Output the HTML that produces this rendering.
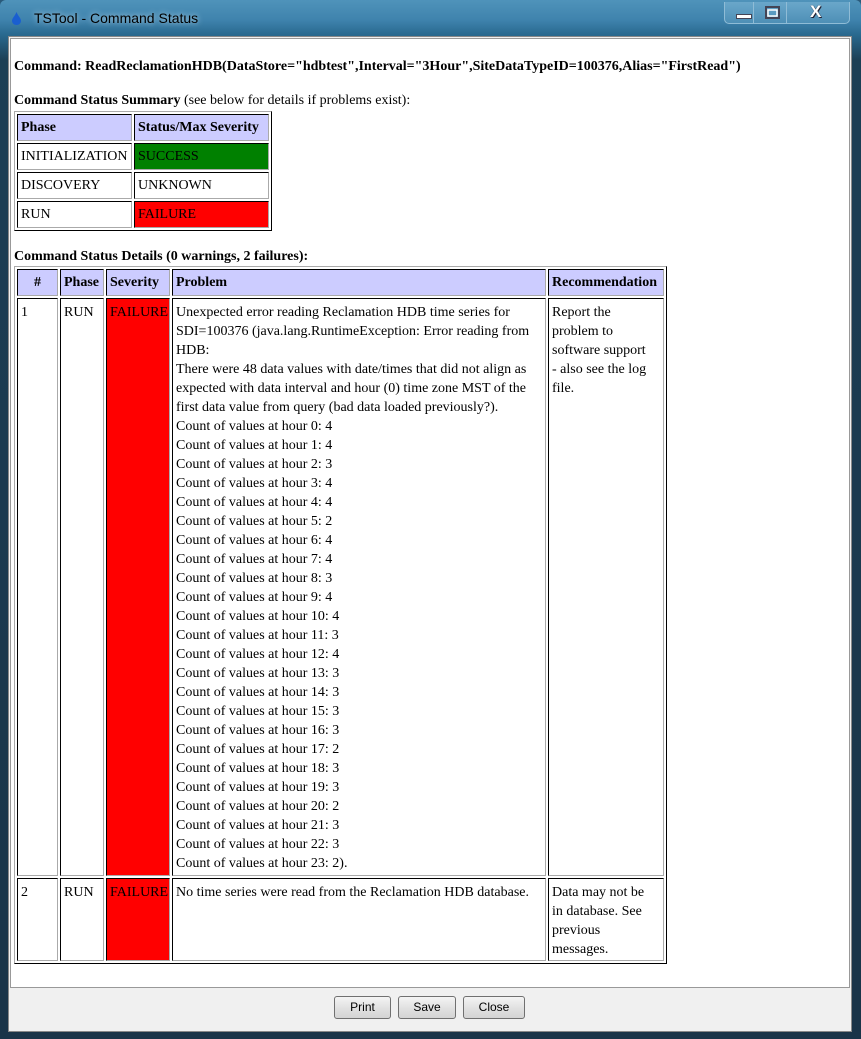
<!DOCTYPE html>
<html><head><meta charset="utf-8"><style>
*{margin:0;padding:0;box-sizing:border-box}
body{width:861px;height:1039px;overflow:hidden;background:#2a5a7a;font-family:"Liberation Serif",serif;font-size:14px;color:#000;position:relative}
.frame{position:absolute;left:0;top:0;width:861px;height:1039px;background:linear-gradient(180deg,#4f93ba 0,#3f83ad 20px,#2a6a90 34px,#1c3f55 60px,#1a3448 1039px);border-radius:6px 6px 0 0}
.title{position:absolute;left:34px;top:10px;font-family:"Liberation Sans",sans-serif;font-size:14px;color:#000;text-shadow:0 0 6px #cfe6f4}
.drop{position:absolute;left:12px;top:12px;width:9px;height:13px}
.btns{position:absolute;left:724px;top:2px;width:126px;height:22px;border:1px solid #8fbcd6;border-top:none;border-radius:0 0 5px 5px;background:linear-gradient(#6aa7ca,#4e8fb6)}
.btns div{position:absolute;top:0;height:21px;border-right:1px solid #8fbcd6}
.inner{position:absolute;left:8px;top:36px;width:844px;height:996px;background:#f0f0f0;border:1px solid #888}
.white{position:absolute;left:10px;top:38px;width:840px;height:950px;background:#fff;border:1px solid #999}
.abs{position:absolute;white-space:nowrap}
b{font-weight:bold}
table{position:absolute;border-collapse:separate;border-spacing:2px;border:1px solid;border-color:#aaa #000 #000 #aaa}
table.det{table-layout:fixed}
td,th{border:1px solid;border-color:#000 #aaa #aaa #000;padding:0 3px;text-align:left;vertical-align:top;font-size:14px;line-height:19px}
th{background:#ccf;font-weight:bold;vertical-align:middle}
.sum td{vertical-align:middle}
.g{background:#008000}.r{background:#f00}
.btn{position:absolute;top:996px;height:23px;border:1px solid #707070;border-radius:3px;background:linear-gradient(#f4f4f4,#e2e2e2 50%,#d4d4d4);font-family:"Liberation Sans",sans-serif;font-size:12px;text-align:center;line-height:21px}
</style></head><body>
<div class="frame"></div>
<svg class="drop" viewBox="0 0 9 13"><path d="M4.5 0 C6 4 9 6 9 9 A4.5 4 0 0 1 0 9 C0 6 3 4 4.5 0Z" fill="#1a5fd0"/></svg>
<div class="title">TSTool - Command Status</div>
<div class="btns"><div style="left:0;width:29px"></div><div style="left:29px;width:33px"></div>
<svg style="position:absolute;left:11px;top:12px" width="16" height="5"><rect x="0.5" y="0.5" width="15" height="4" fill="#fff" stroke="#445"/></svg>
<svg style="position:absolute;left:40px;top:4px" width="15" height="13"><rect x="1" y="1" width="13" height="11" fill="none" stroke="#445" stroke-width="2"/><rect x="3" y="4" width="9" height="6" fill="none" stroke="#fff" stroke-width="1.5"/></svg>
<div style="position:absolute;left:85px;top:0;border:none;color:#fff;font:bold 17px 'Liberation Sans',sans-serif;text-shadow:0 0 1px #223,1px 1px 0 #223">X</div></div>
<div class="inner"></div>
<div class="white"></div>
<div class="abs" style="left:14px;top:59px"><b>Command: ReadReclamationHDB(DataStore="hdbtest",Interval="3Hour",SiteDataTypeID=100376,Alias="FirstRead")</b></div>
<div class="abs" style="left:14px;top:93px"><b>Command Status Summary</b> (see below for details if problems exist):</div>
<table class="sum" style="left:14px;top:111px;width:258px">
<tr style="height:27px"><th style="width:115px">Phase</th><th>Status/Max Severity</th></tr>
<tr style="height:27px"><td>INITIALIZATION</td><td class="g">SUCCESS</td></tr>
<tr style="height:27px"><td>DISCOVERY</td><td>UNKNOWN</td></tr>
<tr style="height:27px"><td>RUN</td><td class="r">FAILURE</td></tr>
</table>
<div class="abs" style="left:14px;top:249px"><b>Command Status Details (0 warnings, 2 failures):</b></div>
<table class="det" style="left:14px;top:266px;width:652px">
<colgroup><col style="width:41px"><col style="width:44px"><col style="width:64px"><col style="width:374px"><col style="width:116px"></colgroup>
<tr style="height:27px"><th style="text-align:center">#</th><th>Phase</th><th>Severity</th><th>Problem</th><th>Recommendation</th></tr>
<tr style="height:578px"><td style="padding-top:4px">1</td><td style="padding-top:4px">RUN</td><td class="r" style="padding-top:4px">FAILURE</td><td style="padding-top:4px">Unexpected error reading Reclamation HDB time series for SDI=100376 (java.lang.RuntimeException: Error reading from HDB:<br>There were 48 data values with date/times that did not align as expected with data interval and hour (0) time zone MST of the first data value from query (bad data loaded previously?).<br>Count of values at hour 0: 4<br>Count of values at hour 1: 4<br>Count of values at hour 2: 3<br>Count of values at hour 3: 4<br>Count of values at hour 4: 4<br>Count of values at hour 5: 2<br>Count of values at hour 6: 4<br>Count of values at hour 7: 4<br>Count of values at hour 8: 3<br>Count of values at hour 9: 4<br>Count of values at hour 10: 4<br>Count of values at hour 11: 3<br>Count of values at hour 12: 4<br>Count of values at hour 13: 3<br>Count of values at hour 14: 3<br>Count of values at hour 15: 3<br>Count of values at hour 16: 3<br>Count of values at hour 17: 2<br>Count of values at hour 18: 3<br>Count of values at hour 19: 3<br>Count of values at hour 20: 2<br>Count of values at hour 21: 3<br>Count of values at hour 22: 3<br>Count of values at hour 23: 2).</td><td style="padding-top:4px">Report the<br>problem to<br>software support<br>- also see the log<br>file.</td></tr>
<tr style="height:83px"><td style="padding-top:4px">2</td><td style="padding-top:4px">RUN</td><td class="r" style="padding-top:4px">FAILURE</td><td style="padding-top:4px">No time series were read from the Reclamation HDB database.</td><td style="padding-top:4px">Data may not be<br>in database. See<br>previous<br>messages.</td></tr>
</table>
<div class="btn" style="left:334px;width:57px">Print</div>
<div class="btn" style="left:398px;width:58px">Save</div>
<div class="btn" style="left:463px;width:62px">Close</div>
</body></html>
